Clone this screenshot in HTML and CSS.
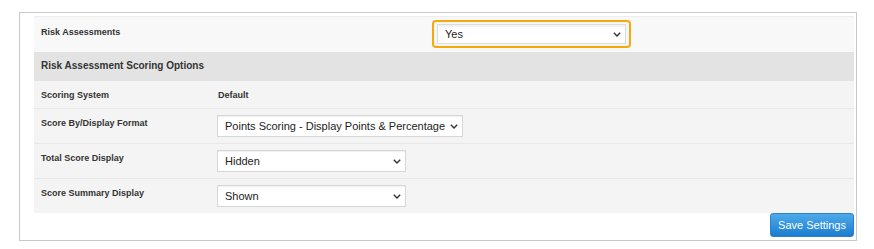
FILE: index.html
```html
<!DOCTYPE html>
<html>
  <head>
    <meta charset="utf-8" />
    <title>Risk Assessment Settings</title>
    <link rel="stylesheet" href="styles.css">
  </head>
  <body>
    <div class="panel">
      <div class="settings">
        <div class="row rowTop">
          <div class="label">Risk Assessments</div>
          <div class="field">
            <span class="focusRing">
              <span class="selectWrap">
                <select class="select yes" name="riskAssessments">
                  <option>Yes</option>
                  <option>No</option>
                </select>
                <svg class="chevron" viewBox="0 0 8 5" width="8" height="5"><path d="M0.8 0.8 L4 4 L7.2 0.8" /></svg>
              </span>
            </span>
          </div>
        </div>
        <div class="row rowHead">Risk Assessment Scoring Options</div>
        <div class="row">
          <div class="label">Scoring System</div>
          <div class="label value">Default</div>
        </div>
        <div class="row">
          <div class="label">Score By/Display Format</div>
          <div class="field">
            <span class="selectWrap">
              <select class="select format" name="scoreBy">
                <option>Points Scoring - Display Points &amp; Percentage</option>
              </select>
              <svg class="chevron" viewBox="0 0 8 5" width="8" height="5"><path d="M0.8 0.8 L4 4 L7.2 0.8" /></svg>
            </span>
          </div>
        </div>
        <div class="row">
          <div class="label">Total Score Display</div>
          <div class="field">
            <span class="selectWrap">
              <select class="select" name="totalScore">
                <option>Hidden</option>
                <option>Shown</option>
              </select>
              <svg class="chevron" viewBox="0 0 8 5" width="8" height="5"><path d="M0.8 0.8 L4 4 L7.2 0.8" /></svg>
            </span>
          </div>
        </div>
        <div class="row">
          <div class="label">Score Summary Display</div>
          <div class="field">
            <span class="selectWrap">
              <select class="select" name="scoreSummary">
                <option>Shown</option>
                <option>Hidden</option>
              </select>
              <svg class="chevron" viewBox="0 0 8 5" width="8" height="5"><path d="M0.8 0.8 L4 4 L7.2 0.8" /></svg>
            </span>
          </div>
        </div>
      </div>
      <div class="actions">
        <button class="saveButton" type="button">Save Settings</button>
      </div>
    </div>
  </body>
</html>
```

FILE: styles.css
```css
html {
  background-color: white;
  color: #333;
  font-family: "Liberation Sans", Arial, sans-serif;
}
body {
  margin: 0;
}

.panel {
  box-sizing: border-box;
  width: 838px;
  height: 229px;
  margin: 12px 0 0 19px;
  border: 1px solid #c8c8c8;
  padding: 3px 2px 2px 14px;
}

.settings {
  display: flex;
  flex-direction: column;
}

.row {
  display: grid;
  grid-template-columns: 183px 1fr;
  align-items: start;
  background: #f4f4f4;
  border-top: 1px solid #e8e8e8;
}

.row .field {
  padding: 6px 0;
  height: 22px;
}

.label {
  font-size: 9px;
  font-weight: bold;
  line-height: 11px;
  padding: 9px 7px 7px 7px;
}

.label.value {
  padding-left: 1px;
}

.rowTop {
  grid-template-columns: 398px 1fr;
  background: #f8f8f8;
  border-top: 1px solid #ededed;
}

.rowTop .label {
  padding-top: 10px;
}

.rowTop .field {
  padding: 3px 0 4px 0;
  height: 28px;
}

.rowHead {
  display: block;
  background: #e3e3e3;
  border-top: none;
  font-size: 10px;
  font-weight: bold;
  line-height: 12px;
  padding: 8px 7px 9px 7px;
}

.rowHead + .row {
  border-top: none;
}

.focusRing {
  display: inline-block;
  box-sizing: border-box;
  height: 28px;
  border: 2px solid #f7a90c;
  border-radius: 4px;
  padding: 2px 3px;
  background: #f6f6f6;
}

.selectWrap {
  position: relative;
  display: inline-block;
}

.select {
  -webkit-appearance: none;
  appearance: none;
  box-sizing: border-box;
  width: 189px;
  height: 22px;
  margin: 0;
  border: 1px solid #d6d6d6;
  border-radius: 0;
  background: white;
  color: #222;
  font-family: "Liberation Sans", Arial, sans-serif;
  font-size: 11px;
  padding: 0 16px 0 7px;
  box-shadow: inset 0 1px 1px rgba(0, 0, 0, 0.06);
}

.select.yes {
  height: 20px;
  border-color: #dcdcdc;
  box-shadow: inset 0 2px 1px rgba(0, 0, 0, 0.05);
}

.select.format {
  width: 246px;
  padding-right: 12px;
}

.chevron {
  position: absolute;
  right: 5px;
  top: 50%;
  margin-top: -2px;
  pointer-events: none;
}

.chevron path {
  fill: none;
  stroke: #333;
  stroke-width: 1.4;
}

.actions {
  display: flex;
  justify-content: flex-end;
}

.saveButton {
  box-sizing: border-box;
  width: 84px;
  height: 24px;
  margin: 0;
  border: 1px solid #2c82c9;
  border-radius: 3px;
  background: linear-gradient(#4eaaea, #1b7dcf);
  color: white;
  font-family: "Liberation Sans", Arial, sans-serif;
  font-size: 11px;
  padding: 0;
  cursor: pointer;
}
```
